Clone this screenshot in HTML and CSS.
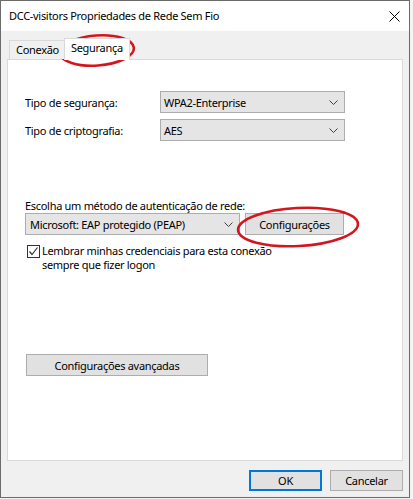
FILE: index.html
```html
<!DOCTYPE html>
<html lang="pt">
<head>
<meta charset="utf-8">
<title>DCC-visitors Propriedades de Rede Sem Fio</title>
<link rel="stylesheet" href="styles.css">
</head>
<body>
<div class="window">
  <div class="titlebar">
    <span class="title">DCC-visitors Propriedades de Rede Sem Fio</span>
    <svg class="close" width="11" height="11" viewBox="0 0 11 11"><path d="M0.5 0.5 L10.5 10.5 M10.5 0.5 L0.5 10.5" stroke="#000" stroke-width="1" fill="none"/></svg>
  </div>
  <div class="content">
    <div class="tabs">
      <div class="tab">Conexão</div>
      <div class="tab active">Segurança</div>
    </div>
    <div class="panel">
      <div class="row first">
        <span class="label">Tipo de segurança:</span>
        <div class="select wide"><span>WPA2-Enterprise</span><svg class="chev" width="9" height="5" viewBox="0 0 9 5"><path d="M0.5 0.5 L4.5 4.5 L8.5 0.5" stroke="#404040" fill="none"/></svg></div>
      </div>
      <div class="row second">
        <span class="label">Tipo de criptografia:</span>
        <div class="select wide"><span>AES</span><svg class="chev" width="9" height="5" viewBox="0 0 9 5"><path d="M0.5 0.5 L4.5 4.5 L8.5 0.5" stroke="#404040" fill="none"/></svg></div>
      </div>
      <div class="method-label">Escolha um método de autenticação de rede:</div>
      <div class="method-row">
        <div class="select method"><span>Microsoft: EAP protegido (PEAP)</span><svg class="chev" width="9" height="5" viewBox="0 0 9 5"><path d="M0.5 0.5 L4.5 4.5 L8.5 0.5" stroke="#404040" fill="none"/></svg></div>
        <div class="button config">Configurações</div>
      </div>
      <div class="check-row">
        <span class="checkbox"><svg width="11" height="11" viewBox="0 0 11 11"><path d="M1.5 5.5 L4 8.5 L9.5 1.5" stroke="#333" stroke-width="1.2" fill="none"/></svg></span>
        <span class="check-text">Lembrar minhas credenciais para esta conexão<br>sempre que fizer logon</span>
      </div>
      <div class="button advanced">Configurações avançadas</div>
    </div>
    <div class="footer">
      <div class="button ok">OK</div>
      <div class="button cancel">Cancelar</div>
    </div>
  </div>
  <svg class="marks" width="413" height="499" viewBox="0 0 413 499">
    <ellipse cx="97" cy="50.5" rx="37" ry="15" transform="rotate(-4 97 50.5)" fill="none" stroke="#d3161e" stroke-width="2.6"/>
    <ellipse cx="298" cy="227" rx="60" ry="19" transform="rotate(-3 298 227)" fill="none" stroke="#d3161e" stroke-width="2.6"/>
  </svg>
</div>
</body>
</html>
```

FILE: styles.css
```css
html, body {
  margin: 0;
  padding: 0;
  background: #f4f4f4;
}
body {
  font-family: "Noto Sans", "Liberation Sans", sans-serif;
  font-size: 11px;
  letter-spacing: -0.3px;
  color: #000;
}
.window {
  position: relative;
  width: 408px;
  height: 496px;
  border: 1px solid #6b6b6b;
  background: #f0f0f0;
  display: flex;
  flex-direction: column;
}
.titlebar {
  height: 30px;
  background: #fff;
  display: flex;
  align-items: center;
  justify-content: space-between;
  padding: 0 8px;
}
.title {
  font-size: 11px;
  margin-top: -1px;
}
.close {
  margin-right: 1px;
}
.content {
  flex: 1;
  padding: 7px 6px 6px 6px;
  display: flex;
  flex-direction: column;
}
.tabs {
  display: flex;
  align-items: flex-end;
  height: 22px;
  margin-bottom: -1px;
  padding-left: 2px;
  position: relative;
  z-index: 1;
}
.tab {
  height: 18px;
  line-height: 18px;
  padding: 0 5px 0 6px;
  border: 1px solid #d9d9d9;
  border-bottom: none;
  background: #f0f0f0;
  margin-bottom: 1px;
}
.tab.active {
  height: 21px;
  line-height: 17px;
  background: #fff;
  margin-left: -1px;
  margin-bottom: 0;
  padding: 0 6px 0 6px;
}
.panel {
  height: 400px;
  border: 1px solid #d9d9d9;
  background: #fff;
  padding: 0 0 0 17px;
  display: flex;
  flex-direction: column;
}
.row {
  display: flex;
  align-items: center;
}
.row.first {
  margin-top: 31px;
}
.row.second {
  margin-top: 6px;
}
.label {
  width: 135px;
}
.select {
  box-sizing: border-box;
  height: 22px;
  background: #e5e5e5;
  border: 1px solid #adadad;
  display: flex;
  align-items: center;
  justify-content: space-between;
  padding: 0 6px 0 3px;
}
.select.wide {
  width: 185px;
}
.select.method {
  width: 215px;
  padding-left: 4px;
}
.chev {
  flex: none;
}
.method-label {
  margin-top: 57px;
  line-height: 15px;
}
.method-row {
  display: flex;
  gap: 5px;
}
.button {
  box-sizing: border-box;
  background: #e1e1e1;
  border: 1px solid #adadad;
  display: flex;
  align-items: center;
  justify-content: center;
}
.button.config {
  width: 99px;
  height: 22px;
}
.check-row {
  display: flex;
  align-items: flex-start;
  margin-top: 10px;
  padding-left: 2px;
}
.checkbox {
  box-sizing: border-box;
  width: 13px;
  height: 13px;
  border: 1px solid #333;
  background: #fff;
  display: flex;
  align-items: center;
  justify-content: center;
  flex: none;
}
.check-text {
  margin-left: 2px;
  line-height: 14px;
  margin-top: -1px;
}
.button.advanced {
  width: 182px;
  height: 22px;
  margin-top: 82px;
  margin-left: 1px;
}
.footer {
  display: flex;
  justify-content: flex-end;
  gap: 8px;
  margin-top: 9px;
}
.button.ok, .button.cancel {
  width: 73px;
  height: 21px;
}
.button.ok {
  border: 2px solid #0078d7;
}
.marks {
  position: absolute;
  left: -1px;
  top: -1px;
  pointer-events: none;
}
```
